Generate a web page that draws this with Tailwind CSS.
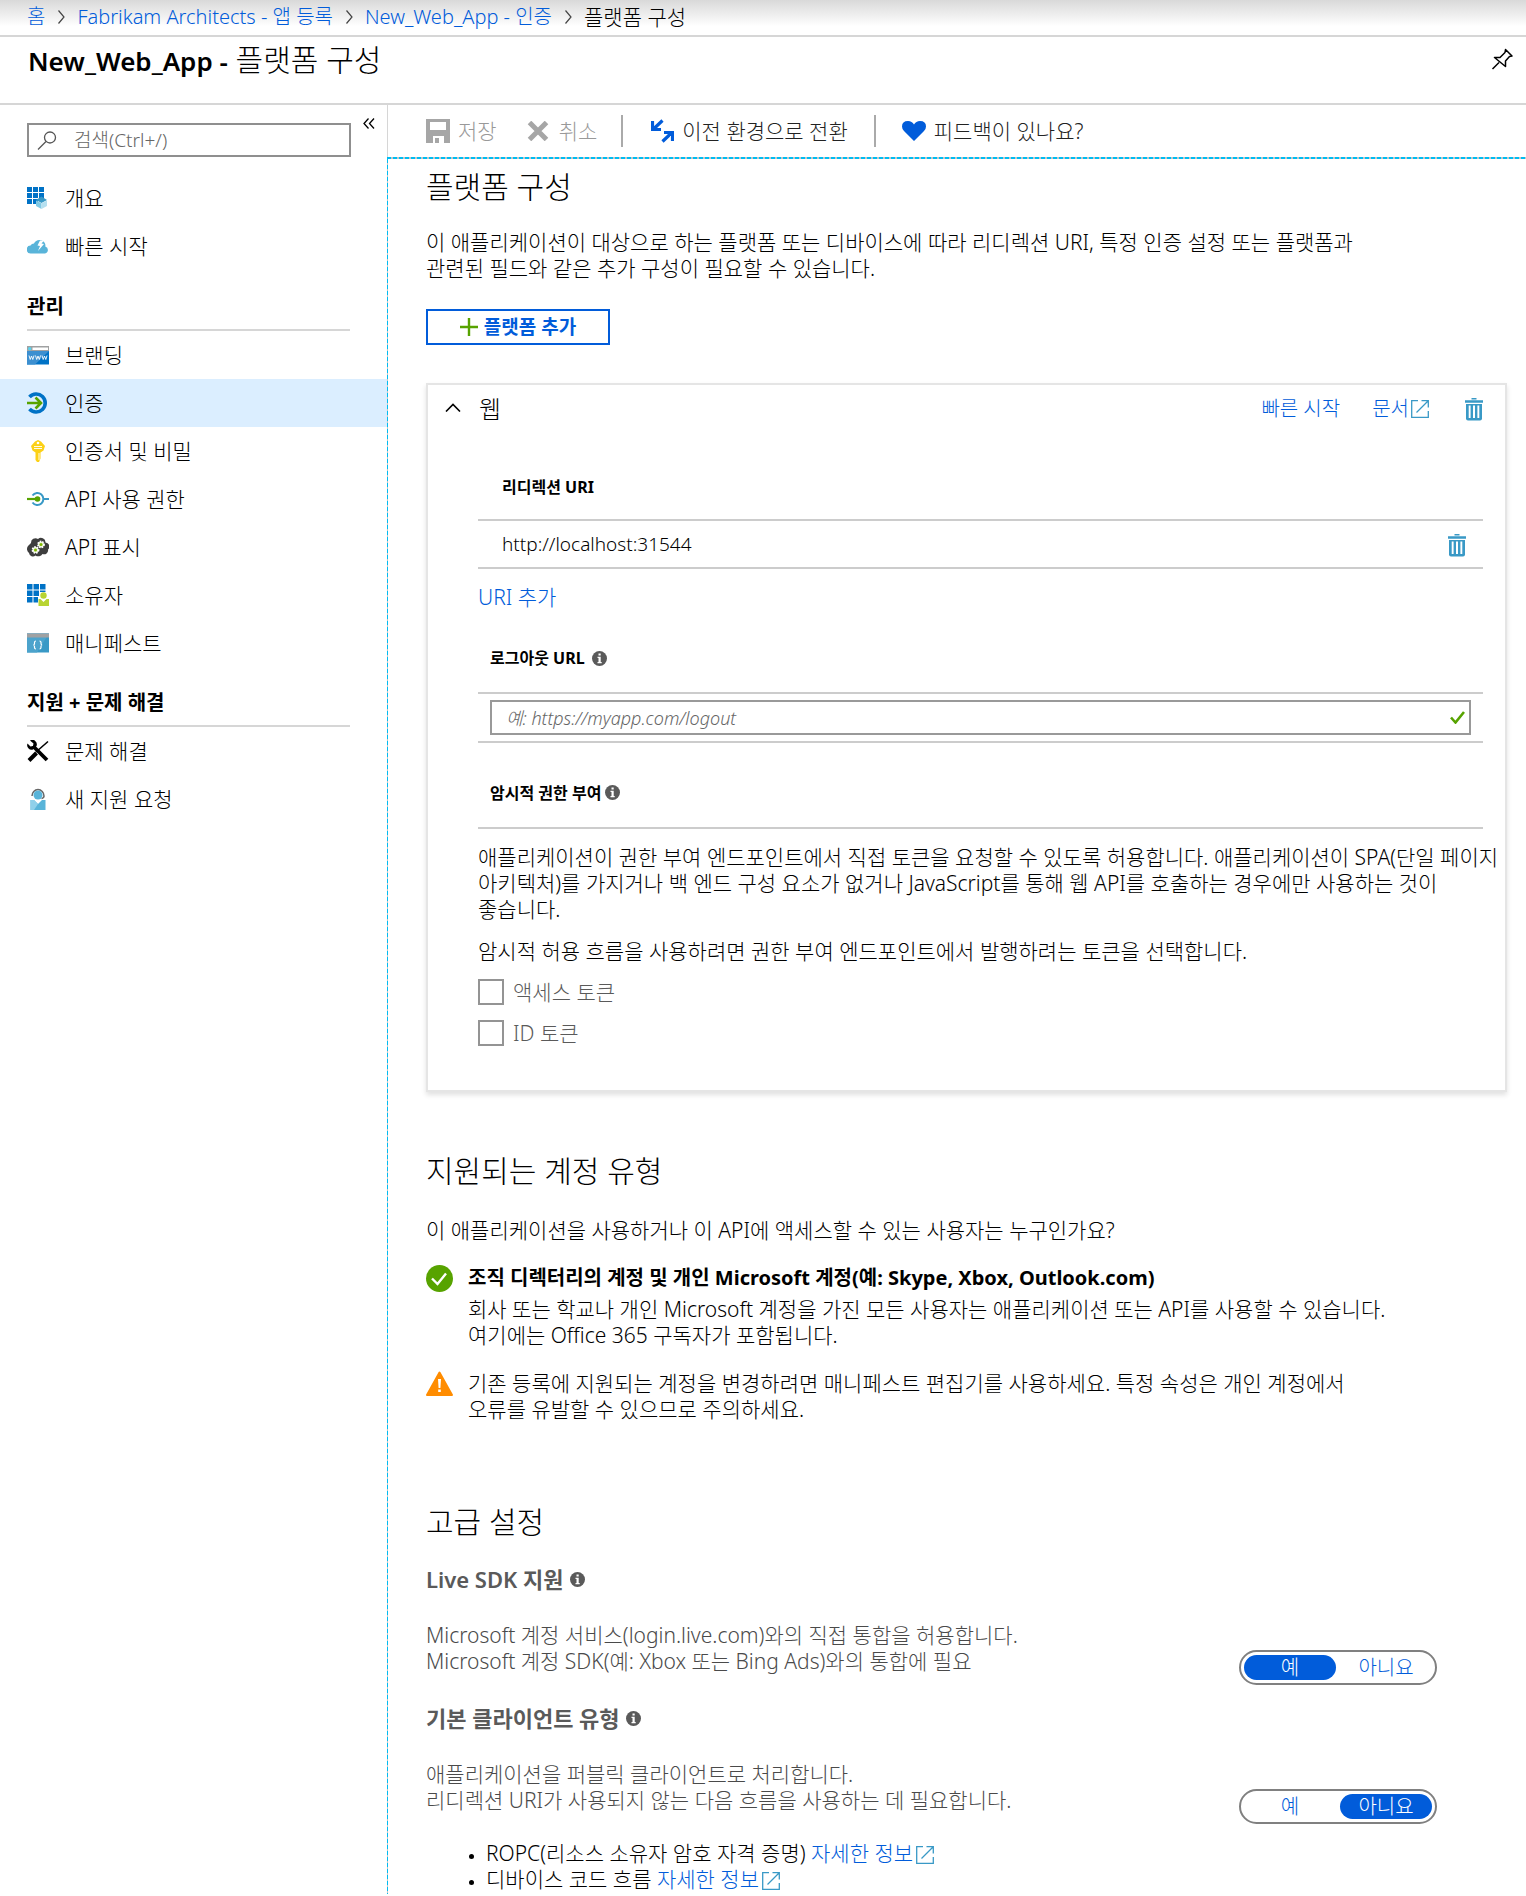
<!DOCTYPE html>
<html lang="ko">
<head>
<meta charset="utf-8">
<title>New_Web_App - 플랫폼 구성</title>
<script src="https://cdn.jsdelivr.net/npm/@tailwindcss/browser@4"></script>
</head>
<body class="min-h-screen bg-white font-['Noto_Sans','Noto_Sans_CJK_KR',sans-serif] text-[21px] leading-[26px] font-light text-black">
<svg class="hidden" aria-hidden="true">
  <symbol id="info" viewBox="0 0 15 15"><circle cx="7.500" cy="7.500" r="7.500" fill="#5a5a5a"/><path d="M6.500 2.500h2.200v2H6.500zM5.500 5.800h3.200v5.200h1v1.200H5.500V11h1V7h-1z" fill="#fff"/></symbol>
  <symbol id="ext" viewBox="0 0 18 18"><path d="M7 .700H.700v16.600h16.600V11M10.500 .700h6.800v6.800M17 1L5.500 12.500" fill="none" stroke="#3999c6" stroke-width="1.300"/></symbol>
  <symbol id="trash" viewBox="0 0 18 23"><path d="M6.500 0h5v1.500h-5zM0 2.200h18v2.600H0z" fill="#3999c6"/><path d="M1 6h16v14.500q0 2-2 2H3q-2 0-2-2z" fill="#3999c6"/><path d="M3.700 7.500h1.900v12.500H3.700zM8 7.500h2v12.500H8zM12.400 7.500h1.900v12.500h-1.900z" fill="#fff"/></symbol>
  <symbol id="crumb" viewBox="0 0 8 14"><path d="M1.500 0.500L7 7L1.500 13.500" fill="none" stroke="#444" stroke-width="1.200"/></symbol>
</svg>

<header>
  <nav aria-label="이동 경로" class="flex h-[37px] items-start gap-3 border-b-2 border-[#d6d6d6] bg-linear-to-b from-[#d9d9d9] to-white to-75% pt-1 pl-[27px] text-[20px] whitespace-nowrap">
    <a href="#" class="text-[#015cda]">홈</a>
    <svg class="mt-[6px] h-[14px] w-2"><use href="#crumb"/></svg>
    <a href="#" class="text-[#015cda]">Fabrikam Architects - 앱 등록</a>
    <svg class="mt-[6px] h-[14px] w-2"><use href="#crumb"/></svg>
    <a href="#" class="text-[#015cda]">New_Web_App - 인증</a>
    <svg class="mt-[6px] h-[14px] w-2"><use href="#crumb"/></svg>
    <span class="text-[21px]">플랫폼 구성</span>
  </nav>
  <div class="flex h-[68px] items-start justify-between border-b-2 border-[#d6d6d6] pt-[3px] pr-[13px] pl-7">
    <h1 class="text-[30px] leading-10"><span class="text-[26px] font-semibold">New_Web_App -</span> 플랫폼 구성</h1>
    <button type="button" aria-label="고정" class="mt-2"><svg class="h-[22px] w-[22px]" viewBox="0 0 22 22" fill="none" stroke="#000" stroke-width="1.500" stroke-linejoin="round"><path d="M1.500 21L8 14.500M14.500 1.500L21 8l-2.500.500-4 4.500v5.500L3.500 9.500h5.500L14 4.500z"/></svg></button>
  </div>
</header>

<div class="flex">
  <aside class="w-[387px] shrink-0">
    <div class="flex items-start justify-between pt-[18px] pr-3 pl-[27px]">
      <label class="flex h-[34px] w-[324px] items-center border-2 border-[#8f8f8f] pl-2">
        <svg class="h-[19px] w-5 shrink-0" viewBox="0 0 20 19" fill="none" stroke="#555" stroke-width="1.300"><circle cx="13" cy="6.500" r="5.500"/><path d="M9 10.500L1 18.500"/></svg>
        <input type="search" aria-label="검색" placeholder="검색(Ctrl+/)" class="ml-[17px] min-w-0 flex-1 text-[19px] outline-none placeholder:text-[#666]">
      </label>
      <button type="button" aria-label="접기"><svg class="mt-[-5px] h-[11px] w-[12px]" viewBox="0 0 12 11" fill="none" stroke="#000" stroke-width="1.300"><path d="M5.500 0.500L1 5.500l4.500 5M11 0.500L6.500 5.500l4.500 5"/></svg></button>
    </div>

    <nav aria-label="메뉴" class="pt-[17px]">
      <a href="#" class="flex h-12 items-center gap-4 pl-[27px]">
        <svg class="size-[22px]" viewBox="0 0 22 22"><path d="M0 0h5v5H0zM6 0h5v5H6zM12 0h5v5h-5zM0 6h5v5H0zM6 6h5v5H6zM12 6h5v5h-5zM0 12h5v5H0zM6 12h5v5H6z" fill="#0072c6"/><path d="M14.500 9.500L20 13l-5.500 3L9 13z" fill="#3999c6"/><path d="M9 13.500l5.500 2.800v5.700L9 19z" fill="#7fc8e4"/><path d="M20 13.500l-5.500 2.800v5.700L20 19z" fill="#b5dfef"/></svg>
        개요</a>
      <a href="#" class="flex h-12 items-center gap-4 pl-[27px]">
        <svg class="size-[22px]" viewBox="0 0 22 22"><path d="M4 18.500a4 4 0 0 1-.500-8 4 4 0 0 1 3.500-2 6 6 0 0 1 11 0c.500 1 .500 2 .300 3a3.600 3.600 0 0 1-.300 7z" fill="#59b4d9"/><path d="M13 5.500l-2.500 5 2.500.500-2 5 6-7-2.500-.500 2.500-3z" fill="#fff"/></svg>
        빠른 시작</a>

      <h2 class="mt-[25px] mr-[37px] ml-[27px] h-9 border-b-2 border-[#d6d6d6] text-[20px] leading-6 font-bold">관리</h2>
      <a href="#" class="flex h-12 items-center gap-4 pl-[27px]">
        <svg class="size-[22px]" viewBox="0 0 22 22"><path d="M0 2h22v18.500H0z" fill="#0072c6"/><path d="M0 2h22v5L8 20.500H0z" fill="#3c8fd0"/><path d="M0 2h22v5H0z" fill="#a0a1a2"/><path d="M5.500 3.500H21v2.500H5.500z" fill="#fff"/><circle cx="2.700" cy="4.700" r="1.700" fill="#59d4f0"/><path d="M2 11.500l1.200 4 1.300-3.500 1.300 3.500 1.200-4M8.500 11.500l1.200 4 1.300-3.500 1.300 3.500 1.200-4M15 11.500l1.200 4 1.300-3.500 1.300 3.500 1.200-4" fill="none" stroke="#fff" stroke-width=".900"/></svg>
        브랜딩</a>
      <a href="#" aria-current="page" class="flex h-12 items-center gap-4 bg-[#dbeeff] pl-[27px]">
        <svg class="size-[22px]" viewBox="0 0 22 22" fill="none"><path d="M2.500 5A9 9 0 1 1 2.500 17" stroke="#0072c6" stroke-width="3.600"/><path d="M0 11h14M8.500 5.500L14 11l-5.500 5.500" stroke="#57a300" stroke-width="2.600"/></svg>
        인증</a>
      <a href="#" class="flex h-12 items-center gap-4 pl-[27px]">
        <svg class="size-[22px]" viewBox="0 0 22 22"><path d="M11 0l3 1.500 4 4.500-1.500 4.500-3 2v6l-1.500 3.500h-2L8.500 20v-7.500l-3-2L4 6l4-4.500z" fill="#fcd116"/><circle cx="11" cy="3" r="1.300" fill="#fff"/><path d="M7 6.500h8M7 8.500h8M12 13v7" stroke="#fff" stroke-width=".900"/></svg>
        인증서 및 비밀</a>
      <a href="#" class="flex h-12 items-center gap-4 pl-[27px]">
        <svg class="size-[22px]" viewBox="0 0 22 22" fill="none"><path d="M5.500 7.500a6 6 0 1 1 0 7" stroke="#3999c6" stroke-width="2"/><path d="M16 11h6" stroke="#3999c6" stroke-width="2"/><path d="M0 11h10" stroke="#57a300" stroke-width="2.200"/><circle cx="10.500" cy="11" r="2.800" fill="#57a300"/></svg>
        API 사용 권한</a>
      <a href="#" class="flex h-12 items-center gap-4 pl-[27px]">
        <svg class="size-[22px]" viewBox="0 0 22 22"><path d="M4 7a4.500 4.500 0 0 1 7-4 4.500 4.500 0 0 1 7.500 3.500 4 4 0 0 1 2.500 7 4 4 0 0 1-5.500 4.500 5 5 0 0 1-7 1.500A4 4 0 0 1 2 17a5 5 0 0 1-1-7z" fill="#3e3e3e"/><g fill="#e8f0d0" stroke="#fff" stroke-width="1.800" stroke-dasharray="1.500 1"><circle cx="14" cy="8.500" r="3"/><circle cx="8.500" cy="14" r="3"/></g><circle cx="14" cy="8.500" r="1.500" fill="#7fba00"/><circle cx="8.500" cy="14" r="1.500" fill="#7fba00"/></svg>
        API 표시</a>
      <a href="#" class="flex h-12 items-center gap-4 pl-[27px]">
        <svg class="size-[22px]" viewBox="0 0 22 22"><path d="M0 0h5.500v5.500H0zM6.500 0H12v5.500H6.500zM13 0h5.500v5.500H13zM0 6.500h5.500V12H0zM6.500 6.500H12V12H6.500zM13 6.500h5.500V8H13zM0 13h5.500v5.500H0zM6.500 13H11v5.500H6.500z" fill="#0072c6"/><circle cx="16.500" cy="11.500" r="3.200" fill="#b8d432"/><path d="M11.500 15h2l3 3 3-3H22v7H11.500z" fill="#b8d432"/></svg>
        소유자</a>
      <a href="#" class="flex h-12 items-center gap-4 pl-[27px]">
        <svg class="size-[22px]" viewBox="0 0 22 22"><path d="M0 1.500h22v19H0z" fill="#3999c6"/><path d="M0 1.500h22L10 20.500H0z" fill="#4ca3cc"/><path d="M0 1.500h22v4H0z" fill="#a0a1a2"/><path d="M9 9q-1.500 0-1.500 1.500v1q0 1.500-1.200 1.500 1.200 0 1.200 1.500v1Q7.500 17 9 17M12.500 9q1.500 0 1.500 1.500v1q0 1.500 1.200 1.500-1.200 0-1.200 1.500v1q0 1.500-1.500 1.500" fill="none" stroke="#fff" stroke-width="1.200"/></svg>
        매니페스트</a>

      <h2 class="mt-[24px] mr-[37px] ml-[27px] h-9 border-b-2 border-[#d6d6d6] text-[20px] leading-6 font-bold">지원 + 문제 해결</h2>
      <a href="#" class="flex h-12 items-center gap-4 pl-[27px]">
        <svg class="size-[22px]" viewBox="0 0 22 22" fill="none" stroke="#000"><path d="M2 20.500L9.500 13" stroke-width="4"/><path d="M9 12L21 1.500" stroke-width="1.600"/><path d="M6 6l14 14" stroke-width="3.800"/><path d="M3 .500L6.500 3.500 6 6 3.500 6.500.500 3.500A4.500 4.500 0 0 0 6 9.500L9.500 6A4.500 4.500 0 0 0 3 .500z" fill="#000" stroke="none"/></svg>
        문제 해결</a>
      <a href="#" class="flex h-12 items-center gap-4 pl-[27px]">
        <svg class="size-[22px]" viewBox="0 0 22 22"><path d="M5 8a6 6.500 0 1 1 12 0q0 2-2.500 2.500" fill="none" stroke="#666" stroke-width="1.500"/><circle cx="11" cy="7" r="4.500" fill="#59b4d9"/><path d="M3.500 12H7l4 4 4-4h3.500v10h-15z" fill="#59b4d9"/><path d="M3.500 12H7l4 4-4 6H3.500z" fill="#8fd0ea"/></svg>
        새 지원 요청</a>
    </nav>
  </aside>

  <div class="flex min-w-0 flex-1 flex-col">
    <div role="toolbar" class="flex h-[52px] items-center border-l border-[#d6d6d6] pl-[38px] whitespace-nowrap text-[#222]">
      <button type="button" disabled class="flex items-center gap-2 text-[#999]">
        <svg class="size-6" viewBox="0 0 24 24" fill="#a6a6a6"><path fill-rule="evenodd" d="M0 0h24v24H18v-7H7v7H0zM4 3v8h16V3zM9 19h4v5H9z"/></svg>저장</button>
      <button type="button" disabled class="ml-[30px] flex items-center gap-[10px] text-[#999]">
        <svg class="h-5 w-[22px]" viewBox="0 0 22 20" stroke="#a6a6a6" stroke-width="5"><path d="M2.500 1.500l17 17M19.500 1.500l-17 17"/></svg>취소</button>
      <div class="ml-6 h-8 w-[2px] bg-[#aaa]"></div>
      <button type="button" class="ml-7 flex items-center gap-2">
        <svg class="h-6 w-[23px]" viewBox="0 0 23 24" fill="none" stroke="#015cda" stroke-width="3.200"><path d="M1.500 2v8.500H10M2 10.500L11.500 1.500M21.500 22v-8.500H13M21 13.500L11.500 22.500"/></svg>이전 환경으로 전환</button>
      <div class="ml-[26px] h-8 w-[2px] bg-[#aaa]"></div>
      <button type="button" class="ml-[26px] flex items-center gap-2">
        <svg class="h-5 w-6" viewBox="0 0 24 20"><path d="M12 20L2 10Q0 8 0 5.500 0 0 6 0q4 0 6 3.500Q14 0 18 0q6 0 6 5.500Q24 8 22 10z" fill="#015cda"/></svg>피드백이 있나요?</button>
    </div>
    <div class="h-[2px] bg-[repeating-linear-gradient(90deg,#00bcf2_0_4px,#c4c4c4_4px_6px)]"></div>

    <div class="flex flex-1">
      <div class="w-px shrink-0 bg-[repeating-linear-gradient(180deg,#00bcf2_0_4px,#c4c4c4_4px_6px)]"></div>
      <main class="min-w-0 flex-1 pt-2 pr-[19px] pb-[2px] pl-[38px]">
        <h2 class="text-[30px] leading-10">플랫폼 구성</h2>
        <p class="mt-[22px]">이 애플리케이션이 대상으로 하는 플랫폼 또는 디바이스에 따라 리디렉션 URI, 특정 인증 설정 또는 플랫폼과<br>관련된 필드와 같은 추가 구성이 필요할 수 있습니다.</p>
        <button type="button" class="mt-7 flex h-9 w-[184px] items-center justify-center gap-[6px] border-2 border-[#015cda] text-[19px] font-bold text-[#015cda]">
          <svg class="size-[18px]" viewBox="0 0 18 18" stroke="#57a300" stroke-width="2.400"><path d="M9 0v18M0 9h18"/></svg>플랫폼 추가</button>

        <section class="mt-[38px] border-2 border-[#e5e5e5] pr-[22px] pb-11 pl-[50px] shadow-[0_3px_5px_rgba(0,0,0,0.12)]">
          <div class="-ml-[33px] flex h-12 items-center">
            <button type="button" aria-label="접기" aria-expanded="true"><svg class="mb-1 h-[9px] w-4" viewBox="0 0 16 9" fill="none" stroke="#000" stroke-width="1.600"><path d="M1 8.500L8 1.500l7 7"/></svg></button>
            <h3 class="ml-[18px] text-[24px]">웹</h3>
            <a href="#" class="ml-auto text-[20px] text-[#015cda]">빠른 시작</a>
            <a href="#" class="ml-8 flex items-center gap-[2px] text-[20px] text-[#015cda]">문서<svg class="size-[18px]"><use href="#ext"/></svg></a>
            <button type="button" aria-label="웹 플랫폼 삭제" class="ml-9"><svg class="h-[23px] w-[18px]"><use href="#trash"/></svg></button>
          </div>

          <table class="mt-[22px] w-full border-collapse">
            <thead><tr class="h-[65px]"><th scope="col" colspan="2" class="pl-6 text-left text-[16px] font-bold">리디렉션 URI</th></tr></thead>
            <tbody><tr class="h-12 border-y-2 border-[#ccc]">
              <td class="pl-6 text-[19px]">http://localhost:31544</td>
              <td class="pr-[17px] text-right"><button type="button" aria-label="URI 삭제" class="align-middle"><svg class="h-[23px] w-[18px]"><use href="#trash"/></svg></button></td>
            </tr></tbody>
          </table>
          <a href="#" class="mt-[15px] block w-fit text-[#015cda]">URI 추가</a>

          <div class="mt-[14px] flex h-[68px] items-center gap-[7px] pl-3 text-[16px] font-bold">
            <label for="logout">로그아웃 URL</label><svg class="size-[15px]"><use href="#info"/></svg>
          </div>
          <div class="border-y-2 border-[#ccc] px-3 py-[6px]">
            <div class="flex h-[35px] items-center border-2 border-[#999] pr-1 pl-[14px]">
              <input id="logout" type="url" placeholder="예: https://myapp.com/logout" class="min-w-0 flex-1 text-[18px] italic outline-none placeholder:text-[#666]">
              <svg class="h-[13px] w-[15px]" viewBox="0 0 15 13" fill="none" stroke="#57a300" stroke-width="2.600"><path d="M1 6.500L5.500 11.500L14 1"/></svg>
            </div>
          </div>

          <h4 class="mt-[15px] flex h-[71px] items-center gap-1 border-b-2 border-[#ccc] pl-3 text-[16px] font-bold">암시적 권한 부여<svg class="size-[15px]"><use href="#info"/></svg></h4>
          <p class="mt-[15px] -mr-5">애플리케이션이 권한 부여 엔드포인트에서 직접 토큰을 요청할 수 있도록 허용합니다. 애플리케이션이 SPA(단일 페이지<br>아키텍처)를 가지거나 백 엔드 구성 요소가 없거나 JavaScript를 통해 웹 API를 호출하는 경우에만 사용하는 것이<br>좋습니다.</p>
          <p class="mt-4">암시적 허용 흐름을 사용하려면 권한 부여 엔드포인트에서 발행하려는 토큰을 선택합니다.</p>
          <label class="mt-[15px] flex w-fit items-center gap-[9px] text-[#5a5a5a]"><input type="checkbox" class="size-[26px] appearance-none border-2 border-[#949494] checked:bg-[#015cda]">액세스 토큰</label>
          <label class="mt-[15px] flex w-fit items-center gap-[9px] text-[#5a5a5a]"><input type="checkbox" class="size-[26px] appearance-none border-2 border-[#949494] checked:bg-[#015cda]">ID 토큰</label>
        </section>

        <h2 class="mt-[59px] text-[30px] leading-10">지원되는 계정 유형</h2>
        <p class="mt-[26px]">이 애플리케이션을 사용하거나 이 API에 액세스할 수 있는 사용자는 누구인가요?</p>
        <div class="mt-[22px] flex items-start gap-[15px]">
          <svg class="size-[27px] shrink-0" viewBox="0 0 27 27"><circle cx="13.500" cy="13.500" r="13.500" fill="#57a300"/><path d="M6 13.500L11.500 19L20 8.500" fill="none" stroke="#fff" stroke-width="2.400"/></svg>
          <div>
            <h3 class="text-[20px] font-bold">조직 디렉터리의 계정 및 개인 Microsoft 계정(예: Skype, Xbox, Outlook.com)</h3>
            <p class="mt-[5px]">회사 또는 학교나 개인 Microsoft 계정을 가진 모든 사용자는 애플리케이션 또는 API를 사용할 수 있습니다.<br>여기에는 Office 365 구독자가 포함됩니다.</p>
          </div>
        </div>
        <div class="mt-[22px] flex items-start gap-[15px]">
          <svg class="h-[27px] w-[27px] shrink-0" viewBox="0 0 27 27"><path d="M13.500 2.500L26 25H1z" fill="#ff8c00" stroke="#ff8c00" stroke-width="2" stroke-linejoin="round"/><path d="M12 9h3l-.600 9h-1.800zM12.200 19.500h2.600v2.600h-2.600z" fill="#fff"/></svg>
          <p>기존 등록에 지원되는 계정을 변경하려면 매니페스트 편집기를 사용하세요. 특정 속성은 개인 계정에서<br>오류를 유발할 수 있으므로 주의하세요.</p>
        </div>

        <h2 class="mt-[80px] text-[30px] leading-10">고급 설정</h2>
        <h3 class="mt-6 flex items-center gap-[6px] text-[22px] font-semibold text-[#5a5a5a]">Live SDK 지원<svg class="size-[15px]"><use href="#info"/></svg></h3>
        <div class="mt-[30px] flex items-start justify-between pr-[70px] text-[#4a4a4a]">
          <p>Microsoft 계정 서비스(login.live.com)와의 직접 통합을 허용합니다.<br>Microsoft 계정 SDK(예: Xbox 또는 Bing Ads)와의 통합에 필요</p>
          <fieldset aria-label="Live SDK 지원" class="mt-7 flex h-[35px] w-[198px] gap-1 rounded-full border-2 border-[#808080] p-[3px] text-center text-[20px] leading-[25px] text-[#015cda]">
            <label class="relative flex-1 rounded-full has-checked:bg-[#015cda] has-checked:text-white"><input type="radio" name="live" checked class="sr-only">예</label>
            <label class="relative flex-1 rounded-full has-checked:bg-[#015cda] has-checked:text-white"><input type="radio" name="live" class="sr-only">아니요</label>
          </fieldset>
        </div>
        <h3 class="mt-5 flex items-center gap-[6px] text-[22px] font-semibold text-[#5a5a5a]">기본 클라이언트 유형<svg class="size-[15px]"><use href="#info"/></svg></h3>
        <div class="mt-[30px] flex items-start justify-between pr-[70px] text-[#4a4a4a]">
          <p>애플리케이션을 퍼블릭 클라이언트로 처리합니다.<br>리디렉션 URI가 사용되지 않는 다음 흐름을 사용하는 데 필요합니다.</p>
          <fieldset aria-label="기본 클라이언트 유형" class="mt-7 flex h-[35px] w-[198px] gap-1 rounded-full border-2 border-[#808080] p-[3px] text-center text-[20px] leading-[25px] text-[#015cda]">
            <label class="relative flex-1 rounded-full has-checked:bg-[#015cda] has-checked:text-white"><input type="radio" name="client" class="sr-only">예</label>
            <label class="relative flex-1 rounded-full has-checked:bg-[#015cda] has-checked:text-white"><input type="radio" name="client" checked class="sr-only">아니요</label>
          </fieldset>
        </div>
        <ul class="mt-4 list-disc pl-[60px] marker:text-[15px]">
          <li>ROPC(리소스 소유자 암호 자격 증명) <a href="#" class="text-[#015cda]">자세한 정보<svg class="ml-[3px] inline size-[18px]"><use href="#ext"/></svg></a></li>
          <li>디바이스 코드 흐름 <a href="#" class="text-[#015cda]">자세한 정보<svg class="ml-[3px] inline size-[18px]"><use href="#ext"/></svg></a></li>
        </ul>
      </main>
    </div>
  </div>
</div>
</body>
</html>
